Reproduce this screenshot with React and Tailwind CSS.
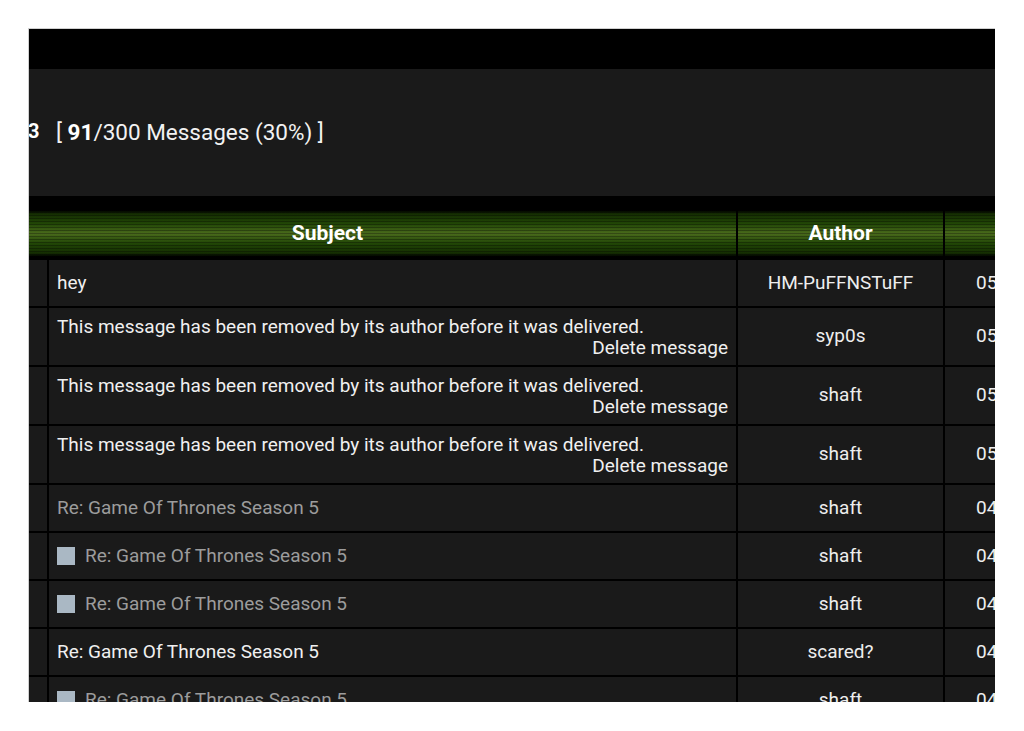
import React from "react";

const rows = [
  { subject: "hey", author: "HM-PuFFNSTuFF", date: "05", tone: "new" },
  { removed: true, author: "syp0s", date: "05" },
  { removed: true, author: "shaft", date: "05" },
  { removed: true, author: "shaft", date: "05" },
  { subject: "Re: Game Of Thrones Season 5", author: "shaft", date: "04", tone: "read" },
  { subject: "Re: Game Of Thrones Season 5", author: "shaft", date: "04", tone: "read", box: true },
  { subject: "Re: Game Of Thrones Season 5", author: "shaft", date: "04", tone: "read", box: true },
  { subject: "Re: Game Of Thrones Season 5", author: "scared?", date: "04", tone: "new" },
  { subject: "Re: Game Of Thrones Season 5", author: "shaft", date: "04", tone: "read", box: true },
];

const headerBg =
  "bg-[repeating-linear-gradient(to_bottom,rgba(0,0,0,0.3)_0px,rgba(0,0,0,0.3)_1px,transparent_1px,transparent_3px),linear-gradient(to_bottom,#000_0%,#000_3%,#152e02_10%,#214606_30%,#4a6a1c_50%,#214606_70%,#152e02_90%,#000_97%,#000_100%)]";

function Row({ row }) {
  const tall = row.removed;
  return (
    <div className={`flex gap-[2px] ${tall ? "h-[57px]" : "h-[46px]"}`}>
      <div className="w-[18px] shrink-0 bg-[#1a1a1a]" />
      <div className="w-[687px] shrink-0 bg-[#1a1a1a] px-2 flex flex-col justify-center">
        {row.removed ? (
          <>
            <span className="text-[19px] leading-[21px] text-[#f0f0f0] whitespace-nowrap">
              This message has been removed by its author before it was delivered.
            </span>
            <span className="text-[19px] leading-[21px] text-[#f0f0f0] text-right">
              Delete message
            </span>
          </>
        ) : (
          <div className="flex items-center gap-[10px]">
            {row.box && <span className="w-[18px] h-[18px] bg-[#aab8c4] shrink-0" />}
            <span
              className={`text-[19px] leading-[22px] whitespace-nowrap ${
                row.tone === "read" ? "text-[#9c9c9c]" : "text-[#f0f0f0]"
              }`}
            >
              {row.subject}
            </span>
          </div>
        )}
      </div>
      <div className="w-[205px] shrink-0 bg-[#1a1a1a] flex items-center justify-center text-[19px] text-[#eeeeee]">
        {row.author}
      </div>
      <div className="flex-1 bg-[#1a1a1a] flex items-center pl-[31px] text-[19px] text-[#eeeeee] overflow-hidden whitespace-nowrap">
        {row.date}
      </div>
    </div>
  );
}

export default function App() {
  return (
    <div className="w-[1024px] h-[731px] bg-white pt-[28px] pl-[28px] font-['Roboto',sans-serif] overflow-hidden">
      <div className="w-[967px] h-[674px] border-t border-l border-[#d0d0d0] overflow-hidden bg-black flex flex-col">
        {/* top bar */}
        <div className="h-[40px] shrink-0 bg-black" />

        {/* folder summary */}
        <div className="h-[127px] shrink-0 bg-[#1a1a1a] flex items-center text-white text-[22.5px] overflow-hidden">
          <span className="font-bold text-[20px] w-[28px] -ml-[1px] -mt-[3px] shrink-0">3</span>
          <span className="text-[#f2f2f2] whitespace-nowrap">
            [ <span className="font-bold text-white">91</span>/300 Messages (30%) ]
          </span>
        </div>

        <div className="h-[13px] shrink-0 bg-black" />

        {/* header */}
        <div className="flex gap-[2px] h-[49px] shrink-0 bg-black">
          <div className={`w-[707px] shrink-0 ${headerBg} flex items-center justify-center pr-[110px] text-[21px] font-bold text-white`}>
            Subject
          </div>
          <div className={`w-[205px] shrink-0 ${headerBg} flex items-center justify-center text-[21px] font-bold text-white`}>
            Author
          </div>
          <div className={`flex-1 ${headerBg}`} />
        </div>

        {/* rows */}
        <div className="flex flex-col gap-[2px] pt-[2px] bg-black">
          {rows.map((row, i) => (
            <Row key={i} row={row} />
          ))}
        </div>
      </div>
    </div>
  );
}
